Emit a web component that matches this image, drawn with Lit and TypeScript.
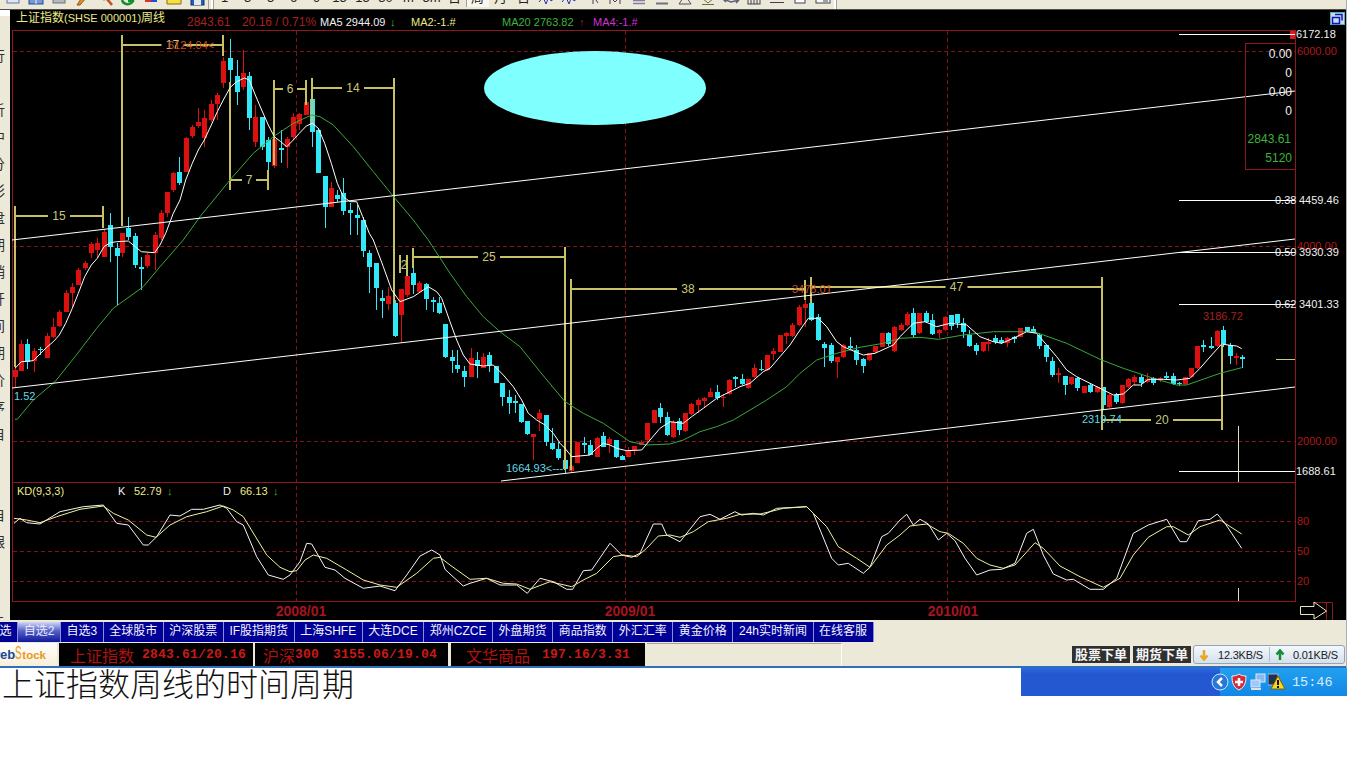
import {css, html, LitElement, svg, unsafeCSS} from 'lit';
import {customElement} from 'lit/decorators.js';

const FONT = unsafeCSS(`"Liberation Sans", "Noto Sans CJK SC", sans-serif`);

// candle rows: colour x bodyTop bodyBottom wickTop wickBottom, read off 3x crops
const CANDLES: Array<[number, number, string]> = [
  [0, 240, `
r 45 390 412 380 440
r 64 312 392 300 392
c 82 312 365 298 388
r 102 332 362 325 395
c 120 326 331 320 345
r 140 288 355 280 355
r 160 260 292 235 295
r 178 216 258 210 260
r 197 158 215 150 215
r 217 142 160 130 200
r 235 90 134 85 134
r 254 68 85 62 90
r 274 12 40 5 55
r 292 10 30 -5 55
r 312 -25 50 -30 50
c 331 -45 20 -80 65
c 350 25 48 10 195
r 367 -20 40 -20 50
c 385 -35 -8 -70 0
c 406 -12 75 -20 85
c 424 80 86 50 150
r 442 45 78 40 85
r 464 -15 38 -25 90
r 482 -80 -5 -90 0
c 1088 -60 32 -70 52
c 1108 38 80 30 160
c 1127 68 145 68 210
c 1145 175 182 150 235
r 1165 168 192 140 210
c 1184 190 288 180 292
r 1202 148 225 148 310
r 1222 108 165 100 170
c 1240 98 135 80 162
r 1258 128 155 122 158
c 1279 132 178 128 210
c 1298 180 186 170 215
c 1316 188 220 170 222
c 1336 252 350 252 355`],
  [0, 0, `
r 500 575 640 575 650
r 520 518 570 515 575
c 538 515 550 470 555
r 557 415 515 410 515
r 577 380 408 375 415
r 595 365 378 325 385
r 613 355 415 330 440
r 634 312 360 300 365
r 652 285 312 280 360
r 670 183 250 170 265
c 691 175 210 118 245
c 710 228 275 180 315
r 728 220 262 150 270
c 748 228 355 215 390
r 766 352 425 315 440
c 785 350 442 350 450
c 805 420 485 410 510
r 823 418 498 405 505
c 842 444 450 390 490
r 862 418 440 410 505
r 880 350 412 340 420
r 898 342 372 340 390
r 919 305 345 240 345
c 937 298 395 298 440
c 955 390 520 385 520
c 974 528 620 528 685
r 994 565 620 545 620
c 1012 585 598 570 605
c 1030 580 632 535 645
c 1050 630 638 610 705
c 1070 646 655 615 705`],
  [450, 240, `
c 5 350 362 330 400
c 22 375 388 330 400
c 43 393 412 378 440
r 62 355 410 325 410
c 80 360 378 335 415
r 100 350 385 340 385
c 118 345 375 335 395
c 137 378 430 378 430
c 157 430 472 430 498
c 176 472 488 450 522
c 194 482 488 465 518
c 214 492 545 492 548
c 232 543 583 543 585
r 250 583 592 583 660
r 268 518 538 508 572
c 288 525 605 525 618
c 307 608 628 565 630
c 325 628 655 605 660
c 346 660 688 660 700
r 364 678 692 675 695
r 382 605 668 605 668
c 402 608 615 590 640
c 421 615 645 600 645
r 440 595 650 590 650
c 460 588 620 575 622
r 478 598 612 590 640
c 497 600 652 600 655
c 517 648 660 645 660
r 535 630 652 620 652
r 553 618 630 618 645
r 574 605 615 600 615
r 592 550 600 550 610
r 611 510 548 510 548
c 630 503 530 488 550
c 650 532 585 515 587
r 668 545 590 540 595
c 688 542 570 535 585
r 706 520 572 520 575
r 724 492 522 490 525
r 745 480 495 475 520
r 763 475 482 470 505
r 781 455 470 445 472
c 802 456 475 435 480
r 820 470 475 462 500
r 838 420 462 418 465
c 856 412 416 408 440
c 877 417 432 403 435
r 895 418 445 418 448
r 913 385 412 372 415
c 933 386 390 360 392
r 952 345 390 345 392
r 970 333 342 325 360
r 990 285 335 285 335
r 1009 280 288 275 312
r 1027 255 288 250 290
r 1047 200 255 195 258
r 1065 192 205 180 262
c 1084 188 240 172 242
c 1105 230 300 222 302
c 1123 312 325 305 382
c 1142 315 362 310 368
r 1162 352 365 352 415
r 1180 315 350 312 355
c 1199 318 325 292 330
c 1219 330 360 315 375
c 1238 358 378 355 398
r 1256 338 360 338 362
r 1276 318 336 318 338
r 1295 280 320 278 322
c 1314 280 312 275 318
r 1333 262 332 258 335`],
  [900, 240, `
r 2 255 270 250 272
r 20 222 255 215 258
c 40 218 285 205 290
r 58 220 280 220 283
c 77 218 245 212 248
c 97 240 282 222 285
r 116 270 280 268 295
r 134 230 270 228 272
c 152 225 258 225 270
c 172 222 250 222 265
c 190 250 275 235 295
c 208 285 318 270 322
c 229 315 332 308 345
r 248 307 332 305 335
r 264 305 312 295 332
c 286 295 305 285 312
c 304 300 310 290 312
r 322 293 310 292 322
c 343 292 298 288 310
r 361 265 290 265 292
c 380 262 272 260 275
c 400 268 278 258 280
c 418 285 318 280 328
c 437 315 350 315 365
c 457 362 405 352 410
r 475 400 405 385 430
c 494 408 435 408 465
r 514 412 432 412 435
c 532 415 445 410 452
r 551 438 458 438 460
c 571 434 455 430 458
r 590 442 455 438 458
c 608 442 495 440 510
r 628 465 500 462 505
c 647 465 485 458 492
r 665 435 490 435 492
r 685 418 440 415 445
r 703 410 425 405 435
c 722 412 430 405 440
r 740 418 425 400 430
c 760 415 428 410 435
r 780 413 420 410 425
c 797 407 413 395 420
c 818 408 432 400 435
c 836 428 433 425 438
r 854 412 432 410 435
r 874 385 410 385 412
r 892 318 385 318 388
c 910 316 321 300 335
c 932 318 323 292 328
r 950 272 318 270 320
c 968 270 312 258 320
c 989 316 348 308 372
r 1007 349 353 340 375
c 1025 350 358 345 385`],
];

const MA5: Array<[number, number, string]> = [
  [0, 240, '45,385 64,365 100,362 140,322 160,305 178,285 197,250 217,205 235,160 254,110 274,75 292,55 312,20 331,8 350,5 385,3 406,20 424,35 464,38 480,15 497,-20'],
  [0, 0, '520,640 540,600 557,540 577,490 595,450 613,420 634,375 652,335 670,300 691,262 710,245 733,234 748,240 766,285 785,330 805,375 823,410 842,425 860,440 880,420 898,400 919,378 937,370 955,385 974,430 994,490 1012,550 1030,590 1050,605 1070,605 1088,650 1108,700'],
  [0, 240, '1120,0 1150,80 1175,150 1200,185 1240,170 1270,150 1285,140 1310,155 1325,175 1350,245'],
  [450, 240, '20,300 40,345 60,372 100,378 130,375 160,405 190,440 215,480 235,520 260,540 285,555 310,580 330,610 345,625 365,650 420,645 440,625 460,610 480,615 500,625 530,632 575,630 600,600 630,565 660,545 700,550 725,530 760,505 800,475 840,455 870,440 900,430 940,395 960,385 990,350 1020,315 1050,270 1075,235 1105,235 1130,260 1160,305 1180,320 1215,335 1240,345 1275,340 1330,315 1350,290'],
  [900, 240, '40,250 75,245 110,260 150,250 200,255 240,290 280,305 305,310 340,295 380,275 410,280 440,315 470,350 500,390 530,410 570,430 600,445 640,465 670,462 700,435 722,435 745,418 790,418 830,420 870,415 900,385 935,345 965,312 990,316 1010,318 1025,326'],
];

const MA20: Array<[number, number, string]> = [
  [0, 240, '45,538 52,538 100,480 165,425 225,350 290,265 340,205 430,140 480,80 550,0'],
  [0, 0, '600,650 690,540 760,460 820,410 880,370 935,345 960,350 1000,375 1060,440 1120,515 1185,595 1240,660 1285,720'],
  [0, 240, '1350,100'],
  [450, 240, '50,170 100,230 150,275 210,320 270,395 345,485 400,520 460,550 540,605 590,615 660,612 700,600 750,575 800,560 850,540 900,510 950,480 1010,440 1050,400 1100,360 1160,340 1230,322 1300,310 1350,295'],
  [900, 240, '60,292 115,298 190,285 280,275 400,275 430,285 500,310 600,358 670,385 760,415 830,435 860,435 960,400 1025,383'],
];

const KD_K: Array<[number, number, string]> = [
  [0, 480, '42,130 60,115 80,128 120,132 180,95 250,80 310,75 350,130 385,135 430,195 445,195 470,170 510,105 540,108 575,88 610,88 660,75 680,85 710,125 730,135 770,230 805,285 850,298 870,285 900,245 920,190 935,192 975,262 1005,270 1035,295 1090,325 1140,318 1185,332 1220,285 1260,228 1295,210 1320,225 1335,268 1350,282'],
  [450, 480, '40,318 60,310 110,295 150,315 200,315 232,340 270,295 310,305 350,328 368,328 400,272 425,270 480,190 515,225 545,232 570,220 610,132 635,132 650,165 690,185 750,110 780,103 810,118 855,95 875,105 910,100 940,105 980,85 1070,80 1090,100 1145,235 1165,255 1195,250 1240,280 1260,262 1295,170 1315,160 1350,120'],
  [900, 480, '20,103 40,135 60,118 85,132 115,180 140,160 165,182 195,235 230,285 270,270 305,268 345,250 380,160 400,148 430,225 460,282 500,300 520,298 570,328 610,328 650,295 700,160 745,135 800,118 840,185 860,185 895,122 930,118 952,102 975,130 1025,205'],
];

const KD_D: Array<[number, number, string]> = [
  [0, 480, '42,115 80,120 120,128 170,110 240,88 310,78 340,100 385,120 440,165 468,172 510,135 560,110 620,95 670,78 700,90 730,110 800,225 840,262 870,275 890,272 915,240 940,225 980,235 1040,270 1090,300 1140,315 1190,322 1250,280 1300,235 1320,232 1350,255'],
  [450, 480, '60,298 110,295 160,310 200,312 240,328 300,305 365,320 400,300 440,280 490,230 520,225 560,230 590,205 625,168 660,165 690,172 730,155 775,125 830,115 870,103 930,102 960,95 1000,85 1070,80 1130,140 1165,200 1220,235 1260,262 1310,195 1350,165'],
  [900, 480, '30,138 80,132 120,155 145,160 190,190 230,235 270,255 310,265 345,255 405,188 430,205 480,258 540,290 610,322 660,295 700,225 745,172 800,140 820,140 865,165 900,140 960,120 1025,162'],
];

// left x, left top/bottom, right x, right top/bottom, bar y, label
const BRACKETS: Array<[number, number, number, number, number, number, number, string]> = [
  [15, 206, 367, 103, 206, 228, 216, '15'],
  [122, 35, 226, 223, 35, 56, 45, '17'],
  [230, 82, 190, 268, 170, 190, 180, '7'],
  [274, 80, 165, 306, 80, 105, 89, '6'],
  [312, 78, 125, 394, 78, 303, 88, '14'],
  [413, 248, 268, 565, 247, 470, 257, '25'],
  [571, 279, 470, 805, 280, 300, 289, '38'],
  [811, 277, 303, 1102, 277, 430, 287, '47'],
  [1102, 277, 430, 1222, 345, 430, 420, '20'],
];

const FIB_LINES: Array<[number, string, string]> = [
  [34, '', '6172.18'],
  [200, '0.38', '4459.46'],
  [252, '0.50', '3930.39'],
  [304, '0.62', '3401.33'],
  [471, '', '1688.61'],
];

const toPoints = (segments: Array<[number, number, string]>) =>
  segments
    .map(([dx, dy, raw]) =>
      raw
        .split(' ')
        .map((p) => {
          const [x, y] = p.split(',').map(Number);
          return `${(dx + x / 3).toFixed(1)},${(dy + y / 3).toFixed(1)}`;
        })
        .join(' ')
    )
    .join(' ');

@customElement('stock-chart')
export class StockChart extends LitElement {
  static override styles = css`
    :host {
      display: block;
      width: 1336px;
      height: 610px;
      background: #000;
    }
    svg {
      display: block;
    }
    text {
      font-family: ${FONT};
      font-size: 11px;
    }
    .frame {
      stroke: #8f1820;
      fill: none;
      shape-rendering: crispEdges;
    }
    .grid {
      stroke: #801418;
      stroke-dasharray: 4 3;
      shape-rendering: crispEdges;
    }
    .wick,
    .bar {
      shape-rendering: crispEdges;
    }
    .bracket {
      stroke: #c8c064;
      stroke-width: 2;
      shape-rendering: crispEdges;
    }
    .bracket-label {
      fill: #c8c878;
      font-size: 12px;
      text-anchor: middle;
    }
    .trend,
    .ma5 {
      stroke: #fff;
      fill: none;
    }
    .ma20 {
      stroke: #3aa83a;
      fill: none;
    }
    .kd-k {
      stroke: #f4f4f4;
      fill: none;
    }
    .kd-d {
      stroke: #f2f29a;
      fill: none;
    }
    .axis {
      fill: #b01818;
    }
    .date {
      fill: #a81420;
      font-size: 14px;
      font-weight: 700;
      text-anchor: middle;
    }
    .big {
      font-size: 12px;
    }
    .code {
      font-size: 11px;
    }
    .white {
      fill: #f0f0f0;
    }
    .right {
      text-anchor: end;
    }
    .green {
      fill: #3cb43c;
    }
    .cyan {
      fill: #66d8e4;
    }
    .red {
      fill: #a82020;
    }
    .yellow {
      fill: #eaea88;
    }
    .magenta {
      fill: #d030d0;
    }
    .orange {
      fill: #c85020;
    }
  `;

  private renderCandles() {
    return CANDLES.map(([dx, dy, raw]) =>
      raw
        .trim()
        .split('\n')
        .map((row) => {
          const [kind, ...nums] = row.split(' ');
          const [zx, top, bottom, wickTop, wickBottom] = nums.map(Number);
          const x = Math.round(dx + zx / 3);
          const colour = kind === 'r' ? '#dd1010' : '#30e8f8';
          const bodyTop = dy + top / 3;
          return svg`
            <line class="wick" x1=${x + 0.5} x2=${x + 0.5} y1=${dy + wickTop / 3} y2=${dy + wickBottom / 3} stroke=${colour}></line>
            <rect class="bar" x=${x - 2} y=${bodyTop} width="5" height=${Math.max(1.5, (bottom - top) / 3)} fill=${colour}></rect>
          `;
        })
    );
  }

  private renderBrackets() {
    return BRACKETS.map(([lx, lt, lb, rx, rt, rb, y, label]) => {
      const mid = (lx + rx) / 2;
      return svg`
        <line class="bracket" x1=${lx} x2=${lx} y1=${lt} y2=${lb}></line>
        <line class="bracket" x1=${rx} x2=${rx} y1=${rt} y2=${rb}></line>
        <line class="bracket" x1=${lx} x2=${rx} y1=${y} y2=${y}></line>
        <rect x=${mid - label.length * 4 - 3} y=${y - 6} width=${label.length * 8 + 6} height="12" fill="#000"></rect>
        <text class="bracket-label" x=${mid} y=${y + 4}>${label}</text>
      `;
    });
  }

  override render() {
    return html`
      <svg width="1336" height="610" viewBox="10 10 1336 610">
        <rect class="frame" x="12.5" y="30.5" width="1283" height="452"></rect>
        <rect class="frame" x="12.5" y="482.5" width="1283" height="119"></rect>

        ${[51, 246, 441, 521, 551, 581].map(
          (y) => svg`<line class="grid" x1="13" x2="1295" y1=${y + 0.5} y2=${y + 0.5}></line>`
        )}
        ${[296, 625, 947].map(
          (x) => svg`<line class="grid" x1=${x + 0.5} x2=${x + 0.5} y1="31" y2="601"></line>`
        )}

        ${this.renderCandles()}
        ${this.renderBrackets()}

        <line class="bracket" x1="400" x2="400" y1="255" y2="273"></line>
        <line class="bracket" x1="407" x2="407" y1="255" y2="276"></line>
        <text class="bracket-label" x="404" y="269">2</text>

        <polyline class="ma20" points=${toPoints(MA20)}></polyline>
        <polyline class="ma5" points=${toPoints(MA5)}></polyline>

        <line class="trend" x1="12" y1="240" x2="1295" y2="91"></line>
        <line class="trend" x1="12" y1="388" x2="1295" y2="239"></line>
        <line class="trend" x1="501" y1="481" x2="1295" y2="387"></line>

        <ellipse cx="595" cy="88" rx="111" ry="37" fill="#80ffff"></ellipse>

        <!-- right hand price labels -->
        <rect x="1290" y="31" width="5" height="8" fill="#e01818"></rect>
        <line class="frame" x1="1295.5" x2="1295.5" y1="30" y2="602"></line>
        <text class="axis" x="1297" y="55">6000.00</text>
        <text class="axis" x="1297" y="250">4000.00</text>
        <text class="axis" x="1297" y="445">2000.00</text>
        <text class="axis" x="1297" y="525">80</text>
        <text class="axis" x="1297" y="555">50</text>
        <text class="axis" x="1297" y="585">20</text>
        ${FIB_LINES.map(
          ([y, ratio, price]) => svg`
            <line stroke="#fff" x1="1179" x2="1295" y1=${y + 0.5} y2=${y + 0.5} shape-rendering="crispEdges"></line>
            ${ratio ? svg`<text class="white" x="1275" y=${y + 4}>${ratio}</text>` : ''}
            <text class="white" x=${ratio ? 1299 : 1296} y=${y + 4}>${price}</text>
          `
        )}

        <!-- data box -->
        <rect class="frame" x="1245.5" y="43.5" width="50" height="126"></rect>
        <text class="white right big" x="1292" y="58">0.00</text>
        <text class="white right big" x="1292" y="77">0</text>
        <text class="white right big" x="1292" y="96">0.00</text>
        <text class="white right big" x="1292" y="115">0</text>
        <text class="green right big" x="1291" y="143">2843.61</text>
        <text class="green right big" x="1292" y="162">5120</text>

        <!-- header -->
        <text class="yellow big" x="16" y="22">上证指数<tspan class="code">(SHSE 000001)</tspan>周线</text>
        <text class="red big" x="187" y="26">2843.61</text>
        <text class="red big" x="242" y="26">20.16 / 0.71%</text>
        <text class="white" x="320" y="26">MA5 2944.09</text>
        <text class="green" x="390" y="26">↓</text>
        <text class="yellow" x="411" y="26">MA2:-1.#</text>
        <text class="green" x="502" y="26">MA20 2763.82</text>
        <text class="red" x="579" y="26">↑</text>
        <text class="magenta" x="593" y="26">MA4:-1.#</text>

        <!-- KD header -->
        <text class="yellow" x="17" y="495">KD(9,3,3)</text>
        <text class="white" x="118" y="495">K</text>
        <text class="yellow" x="134" y="495">52.79</text>
        <text class="green" x="167" y="495">↓</text>
        <text class="white" x="223" y="495">D</text>
        <text class="yellow" x="240" y="495">66.13</text>
        <text class="green" x="273" y="495">↓</text>

        <polyline class="kd-k" points=${toPoints(KD_K)}></polyline>
        <polyline class="kd-d" points=${toPoints(KD_D)}></polyline>

        <!-- price tags on the chart -->
        <text class="orange" x="168" y="49">6124.04&lt;</text>
        <text class="orange" x="792" y="293">3478.01</text>
        <text class="red" x="1203" y="320">3186.72</text>
        <text class="cyan" x="1082" y="423">2319.74</text>
        <text class="cyan" x="506" y="472">1664.93&lt;---</text>
        <text class="cyan" x="14" y="400">1.52</text>

        <line stroke="#c8c878" x1="1276" x2="1295" y1="359.5" y2="359.5" shape-rendering="crispEdges"></line>
        <line stroke="#e0e0c0" x1="1238.5" x2="1238.5" y1="426" y2="482" shape-rendering="crispEdges"></line>
        <line stroke="#e0e0c0" x1="1238.5" x2="1238.5" y1="588" y2="601" shape-rendering="crispEdges"></line>

        <text class="date" x="301" y="616">2008/01</text>
        <text class="date" x="630" y="616">2009/01</text>
        <text class="date" x="953" y="616">2010/01</text>

        <!-- pager arrow -->
        <path d="M1313 602.500h19.500v18M1326.500 602v18" stroke="#8f1820" fill="none"></path>
        <path d="M1300.500 606.500h13.500v-4.500l12.500 9-12.500 8v-4.500h-13.500z" stroke="#e8e8b8" fill="#000"></path>

        <!-- restore window button -->
        <rect x="1330" y="12" width="15" height="13" fill="#58b0b8"></rect>
        <rect x="1331" y="13" width="13" height="11" fill="#c8d8f0"></rect>
        <path d="M1335 14.500h7v6M1332.500 17.500h7v6h-7z" stroke="#1018b0" stroke-width="1.500" fill="none"></path>
      </svg>
    `;
  }
}

const ICON_SVG = (body: unknown) =>
  html`<svg width="18" height="16" viewBox="0 0 18 16">${body}</svg>`;

const LEFT_ICONS = [
  svg`<rect x="3" y="3" width="12" height="10" fill="#dfe4ee" stroke="#6078a8"></rect><path d="M5 9h8" stroke="#6078a8"></path>`,
  svg`<rect x="2" y="4" width="14" height="10" fill="#7898d0" stroke="#2048a0"></rect><path d="M2 9h14M9 4v10" stroke="#e8f0ff"></path>`,
  svg`<rect x="3" y="5" width="12" height="8" fill="#b8b8c0" stroke="#707078"></rect>`,
  svg`<path d="M4 15l6-9 3 2-6 7z" fill="#e89030" stroke="#905010"></path>`,
  svg`<circle cx="8" cy="6" r="4" fill="#e0f0ff" stroke="#606060"></circle><path d="M11 9l5 6" stroke="#c05020" stroke-width="2.500"></path>`,
  svg`<path d="M3 10a6 6 0 0 0 11 1M14 6v5h-5" stroke="#109030" stroke-width="2.500" fill="none"></path>`,
  svg`<rect x="3" y="7" width="6" height="5" fill="#e03020"></rect><rect x="9" y="7" width="6" height="5" fill="#2050d0"></rect>`,
  svg`<path d="M2 6h9l5 3v5H2z" fill="#f8e040" stroke="#807010"></path>`,
  svg`<rect x="3" y="2" width="13" height="13" fill="#2060b8" stroke="#103070"></rect><rect x="6" y="10" width="7" height="5" fill="#e8e8e8"></rect>`,
];

const RIGHT_ICONS = [
  svg`<path d="M1 12l4-5 3 7 3-8 2 5 4-3" stroke="#3030b0" fill="none"></path>`,
  svg`<path d="M1 12l4-5 3 7 3-8 2 5 4-3" stroke="#3030b0" fill="none"></path>`,
  svg`<path d="M3 5l5 5V4l6 9" stroke="#404058" fill="none"></path><path d="M9 4v10" stroke="#404058"></path>`,
  svg`<path d="M3 14V7l5 5 5-5v7" stroke="#404058" fill="none"></path>`,
  svg`<path d="M3 10.500h12M3 13.500h12" stroke="#8080a0" stroke-width="1.500"></path>`,
  svg`<path d="M3 13.500h12" stroke="#707088" stroke-width="2"></path>`,
  svg`<path d="M9 5l6 9H3z" fill="none" stroke="#505060"></path>`,
  svg`<path d="M3 8h12L9 13zM3 14.500h12" fill="none" stroke="#707040"></path>`,
  svg`<path d="M1 9l8 3 8-2M4 12l-3-3M14 13l3-3" stroke="#606078" fill="none" stroke-width="1.500"></path>`,
  svg`<rect x="3" y="9" width="12" height="5" fill="none" stroke="#404050"></rect><path d="M6 9v5M9 9v5M12 9v5" stroke="#404050"></path>`,
  svg`<path d="M2 12.500h14M8 9h3" stroke="#404050"></path>`,
  svg`<rect x="4" y="7" width="10" height="6" fill="#fff" stroke="#404050"></rect>`,
  svg`<rect x="2" y="6" width="14" height="7" fill="#f8f8f8" stroke="#404050"></rect><path d="M9 9h5M9 11h5" stroke="#404050"></path>`,
];

const PERIODS = ['1', '3', '5', '6', '9', '15', '15', '30', 'm', '5m', '日', '周', '月', '日'];

const TABS = ['自选', '自选2', '自选3', '全球股市', '沪深股票', 'IF股指期货', '上海SHFE', '大连DCE', '郑州CZCE', '外盘期货', '商品指数', '外汇汇率', '黄金价格', '24h实时新闻', '在线客服'];

const SIDE_GLYPHS = ['行', '', '析', '中', '分', '彩', '盘', '期', '销', '开', '间', '期', '价', '序', '自', '', '', '自', '银', '', '', '示'];

@customElement('app-root')
export class AppRoot extends LitElement {
  static override styles = css`
    :host {
      display: block;
      width: 1366px;
      height: 768px;
      background: #fff;
      overflow: hidden;
      font-family: ${FONT};
    }
    .window {
      width: 1346px;
      background: #ece9d8;
      border-right: 1px solid #b0b0b0;
    }
    .toolbar {
      display: flex;
      height: 9px;
      overflow: hidden;
      padding-left: 1px;
    }
    .tool {
      width: 23px;
      height: 7px;
      overflow: hidden;
      display: flex;
      justify-content: center;
      flex: none;
    }
    .tool svg {
      margin-top: -10px;
      flex: none;
    }
    .period {
      margin-top: -10px;
      font-size: 13px;
      line-height: 16px;
      color: #222;
    }
    .pressed {
      background: #f8f7f0;
      box-shadow: inset 1px 0 #a0a0a0;
    }
    .tool-sep {
      width: 1px;
      margin: 0 2px 0 0;
      background: #a8a490;
      flex: none;
    }
    .tool-end {
      width: 2px;
      background: #fff;
      box-shadow: 1px 0 #a0a0a0;
      flex: none;
    }
    .edge {
      height: 1px;
      background: #505048;
    }
    .workspace {
      display: flex;
    }
    .sidebar {
      width: 10px;
      height: 610px;
      overflow: hidden;
      flex: none;
      background: #ece9d8;
      display: flex;
      flex-direction: column;
      font-size: 14px;
      color: #303030;
    }
    .sidebar-top {
      height: 6px;
      background: #fff;
      flex: none;
      margin-bottom: 27px;
    }
    .sidebar span {
      height: 27px;
      line-height: 27px;
      margin-left: -9px;
      flex: none;
    }
    .tabs {
      display: flex;
      height: 20px;
      margin-top: 2px;
      overflow: hidden;
    }
    .tab {
      flex: none;
      padding: 0 5.55px;
      line-height: 19px;
      font-size: 12px;
      color: #f4f4ff;
      background: #000096;
      border-right: 1px solid #8890d8;
    }
    .tab.first {
      margin-left: -18px;
    }
    .tab.active {
      background: linear-gradient(#d4d8f4, #5560c8 45%, #10189c);
      color: #e8ecff;
    }
    .status {
      display: flex;
      height: 23px;
      margin-top: 1px;
      gap: 2px;
      border-bottom: 2px solid #2f6fc0;
      align-items: stretch;
    }
    .logo {
      width: 57px;
      flex: none;
      overflow: hidden;
      background: linear-gradient(#ffffff, #f8efd8);
      font-size: 13px;
      font-weight: 700;
      line-height: 23px;
      color: #184898;
      white-space: nowrap;
      text-indent: -10px;
    }
    .logo b {
      font-size: 11.5px;
      color: #e89820;
    }
    .logo i {
      display: inline-block;
      width: 7px;
      text-indent: 0;
      font-style: normal;
      font-weight: 400;
      font-size: 18px;
      line-height: 1;
      color: #e89820;
      transform: scaleX(0.55);
      transform-origin: left;
    }
    .ticker {
      width: 194px;
      flex: none;
      box-sizing: border-box;
      background: #000;
      color: #b01010;
      display: flex;
      align-items: center;
      font-size: 16px;
      white-space: nowrap;
      padding-left: 11px;
    }
    .ticker b {
      font-family: 'Liberation Mono', monospace;
      font-size: 13px;
      letter-spacing: 0.2px;
      color: #cc1818;
    }
    .ticker .price {
      margin-left: 8px;
    }
    .ticker .tight {
      margin-left: 0;
    }
    .ticker.second {
      padding-left: 8px;
      width: 193px;
    }
    .ticker.second .price {
      margin-left: 14px;
    }
    .ticker.third {
      padding-left: 15px;
      margin-left: 1px;
    }
    .ticker.third .price {
      margin-left: 12px;
    }
    .panel {
      width: 194px;
      flex: none;
      border-top: 1px solid #a8a490;
      border-right: 1px solid #fff;
    }
    .spacer {
      flex: 1;
    }
    .order-buttons {
      display: flex;
      gap: 3px;
      align-items: center;
    }
    .order-buttons span {
      background: #303030;
      color: #f4f4f4;
      font-size: 13px;
      font-weight: 700;
      padding: 0 3px;
      line-height: 17px;
    }
    .speed {
      width: 152px;
      height: 19px;
      box-sizing: border-box;
      margin: 2px 1px 0 0;
      padding-left: 5px;
      display: flex;
      align-items: center;
      font-size: 11px;
      letter-spacing: -0.2px;
      color: #202020;
      background: linear-gradient(#f4f8fc, #d4e0ee);
      border: 1px solid #90a4bc;
      border-radius: 3px;
    }
    .speed svg {
      flex: none;
      margin-right: 9px;
    }
    .speed .divide {
      width: 1px;
      height: 15px;
      background: #b0c0d0;
      margin: 0 5px 0 6px;
    }
    .speed .up {
      margin-right: 8px;
    }
    .lower {
      display: flex;
      justify-content: space-between;
      width: 1347px;
    }
    .caption {
      font-size: 32px;
      line-height: 34px;
      color: #111;
      font-weight: 300;
      padding-left: 2px;
      white-space: nowrap;
    }
    .taskbar {
      width: 326px;
      height: 28px;
      display: flex;
      background: linear-gradient(#2f6ae0, #2358d0 20%, #2458d4);
    }
    .task-space {
      width: 199px;
    }
    .tray {
      flex: 1;
      display: flex;
      align-items: center;
      gap: 1px;
      background: linear-gradient(#22a0f0, #1288e6);
    }
    .tray .chevron {
      margin-left: -9px;
    }
    .clock {
      color: #d8ecff;
      font-family: 'Liberation Mono', monospace;
      font-size: 13.5px;
      margin-left: 5px;
      white-space: nowrap;
    }
  `;

  override render() {
    return html`
      <div class="window">
        <div class="toolbar">
          ${LEFT_ICONS.map((icon) => html`<div class="tool">${ICON_SVG(icon)}</div>`)}
          <div class="tool-sep"></div>
          <div class="tool-end"></div>
          ${PERIODS.map(
            (label, i) =>
              html`<div class="tool ${i === 11 ? 'pressed' : ''}"><span class="period">${label}</span></div>`
          )}
          ${RIGHT_ICONS.map((icon) => html`<div class="tool">${ICON_SVG(icon)}</div>`)}
          <div class="tool-end"></div>
        </div>
        <div class="edge"></div>
        <div class="workspace">
          <div class="sidebar">
            <div class="sidebar-top"></div>
            ${SIDE_GLYPHS.map((g) => html`<span>${g}</span>`)}
          </div>
          <stock-chart></stock-chart>
        </div>
        <div class="tabs">
          ${TABS.map(
            (t, i) =>
              html`<div class="tab ${i === 0 ? 'first' : ''} ${i === 1 ? 'active' : ''}">${t}</div>`
          )}
        </div>
        <div class="status">
          <div class="logo">web<i>S</i><b>tock</b></div>
          <div class="ticker">上证指数<b class="price">2843.61/20.16</b></div>
          <div class="ticker second">沪深<b class="tight">300</b><b class="price">3155.06/19.04</b></div>
          <div class="ticker third">文华商品<b class="price">197.16/3.31</b></div>
          <div class="panel"></div>
          <div class="spacer"></div>
          <div class="order-buttons"><span>股票下单</span><span>期货下单</span></div>
          <div class="speed">
            <svg width="10" height="12" viewBox="0 0 10 12"><path d="M5 1v9M1.500 6.500L5 10.500l3.500-4" stroke="#e8a820" stroke-width="2.500" fill="none"></path></svg>
            <span>12.3KB/S</span><span class="divide"></span>
            <svg class="up" width="10" height="12" viewBox="0 0 10 12"><path d="M5 11V2M1.500 5.500L5 1.500l3.500 4" stroke="#109030" stroke-width="2.500" fill="none"></path></svg>
            <span>0.01KB/S</span>
          </div>
        </div>
      </div>
      <div class="lower">
        <div class="caption">上证指数周线的时间周期</div>
        <div class="taskbar">
          <div class="task-space"></div>
          <div class="tray">
            <svg class="chevron" width="18" height="18" viewBox="0 0 18 18">
              <circle cx="9" cy="9" r="8" fill="#2878d8" stroke="#c8e4ff"></circle>
              <path d="M11 5L7 9l4 4" stroke="#fff" stroke-width="2.500" fill="none"></path>
            </svg>
            <svg width="18" height="18" viewBox="0 0 18 18">
              <path d="M9 1c2 1.500 4 2 7 2 0 6-1 11-7 14C3 14 2 9 2 3c3 0 5-.5 7-2z" fill="#d82838" stroke="#f0f0f0"></path>
              <path d="M9 5v8M5 9h8" stroke="#fff" stroke-width="2.500"></path>
            </svg>
            <svg width="18" height="18" viewBox="0 0 18 18">
              <rect x="7" y="1" width="9" height="8" fill="#88b8f0" stroke="#d8e8ff"></rect>
              <rect x="2" y="7" width="9" height="7" fill="#a0c8f8" stroke="#d8e8ff"></rect>
              <path d="M2 16h10" stroke="#e0e0e0" stroke-width="2"></path>
            </svg>
            <svg width="18" height="18" viewBox="0 0 18 18">
              <rect x="0" y="1" width="10" height="11" fill="#203050" stroke="#a0b8d8"></rect>
              <path d="M10 3l7 13H3z" fill="#f8d820" stroke="#806000"></path>
              <path d="M10 7v5M10 13v2" stroke="#101010" stroke-width="2"></path>
            </svg>
            <span class="clock">15:46</span>
          </div>
        </div>
      </div>
    `;
  }
}

declare global {
  interface HTMLElementTagNameMap {
    'app-root': AppRoot;
    'stock-chart': StockChart;
  }
}
